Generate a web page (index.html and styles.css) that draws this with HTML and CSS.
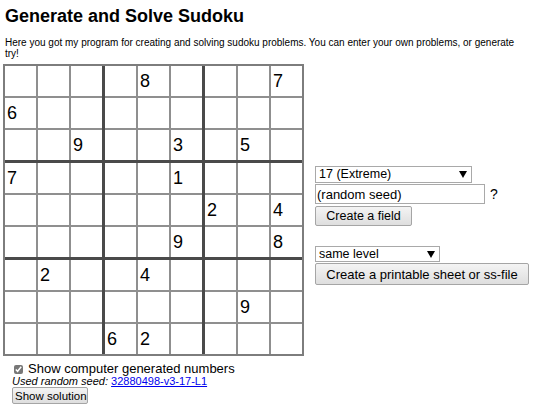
FILE: index.html
```html
<!DOCTYPE html>
<html>
<head>
<meta charset="utf-8">
<title>Generate and Solve Sudoku</title>
<link rel="stylesheet" href="styles.css">
</head>
<body>
<h1 class="title">Generate and Solve Sudoku</h1>
<p class="intro"><span class="line">Here you got my program for creating and solving sudoku problems. You can enter your own problems, or generate</span><br>try!</p>
<div class="main">
  <div class="board">
    <div class="box"><div class="cell"></div><div class="cell"></div><div class="cell"></div><div class="cell">6</div><div class="cell"></div><div class="cell"></div><div class="cell"></div><div class="cell"></div><div class="cell">9</div></div>
    <div class="box"><div class="cell"></div><div class="cell">8</div><div class="cell"></div><div class="cell"></div><div class="cell"></div><div class="cell"></div><div class="cell"></div><div class="cell"></div><div class="cell">3</div></div>
    <div class="box"><div class="cell"></div><div class="cell"></div><div class="cell">7</div><div class="cell"></div><div class="cell"></div><div class="cell"></div><div class="cell"></div><div class="cell">5</div><div class="cell"></div></div>
    <div class="box"><div class="cell">7</div><div class="cell"></div><div class="cell"></div><div class="cell"></div><div class="cell"></div><div class="cell"></div><div class="cell"></div><div class="cell"></div><div class="cell"></div></div>
    <div class="box"><div class="cell"></div><div class="cell"></div><div class="cell">1</div><div class="cell"></div><div class="cell"></div><div class="cell"></div><div class="cell"></div><div class="cell"></div><div class="cell">9</div></div>
    <div class="box"><div class="cell"></div><div class="cell"></div><div class="cell"></div><div class="cell">2</div><div class="cell"></div><div class="cell">4</div><div class="cell"></div><div class="cell"></div><div class="cell">8</div></div>
    <div class="box"><div class="cell"></div><div class="cell">2</div><div class="cell"></div><div class="cell"></div><div class="cell"></div><div class="cell"></div><div class="cell"></div><div class="cell"></div><div class="cell"></div></div>
    <div class="box"><div class="cell"></div><div class="cell">4</div><div class="cell"></div><div class="cell"></div><div class="cell"></div><div class="cell"></div><div class="cell">6</div><div class="cell">2</div><div class="cell"></div></div>
    <div class="box"><div class="cell"></div><div class="cell"></div><div class="cell"></div><div class="cell"></div><div class="cell">9</div><div class="cell"></div><div class="cell"></div><div class="cell"></div><div class="cell"></div></div>
  </div>
  <div class="panel">
    <div class="select-wrap level">
      <select class="select"><option>17 (Extreme)</option></select>
      <svg class="arrow" width="8" height="7" viewBox="0 0 8 7"><polygon points="0,0 8,0 4,7" fill="#000"/></svg>
    </div>
    <div class="seed-row">
      <input class="seed-input" type="text" value="(random seed)">
      <span class="help">?</span>
    </div>
    <button class="btn btn-field">Create a field</button>
    <div class="select-wrap same">
      <select class="select"><option>same level</option></select>
      <svg class="arrow" width="8" height="7" viewBox="0 0 8 7"><polygon points="0,0 8,0 4,7" fill="#000"/></svg>
    </div>
    <button class="btn btn-wide">Create a printable sheet or ss-file</button>
  </div>
</div>
<div class="footer">
  <label class="check"><input class="checkbox" type="checkbox" checked> Show computer generated numbers</label>
  <div class="seed"><em>Used random seed:</em> <a class="seed-link" href="#">32880498-v3-17-L1</a></div>
  <button class="btn btn-small">Show solution</button>
</div>
</body>
</html>
```
FILE: styles.css
```css
html, body {
  margin: 0;
  padding: 0;
  background: #fff;
}
body {
  font-family: "Liberation Sans", Arial, sans-serif;
  color: #000;
  padding: 0 0 0 3px;
}
.title {
  font-size: 18px;
  font-weight: bold;
  margin: 0;
  padding: 6px 0 0 2px;
  line-height: 21px;
}
.intro {
  font-size: 10px;
  line-height: 11px;
  margin: 10px 0 0 2px;
}
.line {
  white-space: nowrap;
}
.main {
  display: flex;
  align-items: flex-start;
  margin-top: 5px;
}
.board {
  display: grid;
  grid-template-columns: repeat(3, auto);
  gap: 3px;
  background: #4a4a4a;
  border: 2px solid #7d7d7d;
  width: max-content;
}
.box {
  display: grid;
  grid-template-columns: repeat(3, 31px);
  grid-auto-rows: 30px;
  gap: 2px;
  background: #8f8f8f;
}
.cell {
  background: #fff;
  font-size: 18px;
  line-height: 30px;
  padding-left: 2px;
}
.panel {
  display: flex;
  flex-direction: column;
  align-items: flex-start;
  margin: 102px 0 0 11px;
  font-size: 12.5px;
}
.select-wrap {
  position: relative;
  display: block;
}
.select {
  appearance: none;
  -webkit-appearance: none;
  font-family: "Liberation Sans", Arial, sans-serif;
  font-size: 12.5px;
  color: #000;
  background: #fff;
  border: 1px solid #a9a9a9;
  border-radius: 0;
  padding: 0 0 0 3px;
  margin: 0;
  height: 17px;
  line-height: 15px;
  display: block;
}
.level .select {
  width: 157px;
}
.same .select {
  width: 125px;
  height: 16px;
}
.arrow {
  position: absolute;
  top: 5px;
  right: 5px;
  pointer-events: none;
}
.same .arrow {
  top: 5px;
}
.seed-row {
  display: flex;
  align-items: center;
  margin-top: 1px;
}
.seed-input {
  font-family: "Liberation Sans", Arial, sans-serif;
  font-size: 13px;
  width: 170px;
  height: 20px;
  box-sizing: border-box;
  border: 1px solid #a9a9a9;
  padding: 0 1px;
  margin: 0;
}
.help {
  font-size: 14px;
  margin-left: 5px;
}
.btn {
  font-family: "Liberation Sans", Arial, sans-serif;
  font-size: 12.5px;
  color: #000;
  background: linear-gradient(#f4f4f4, #dedede);
  border: 1px solid #a5a5a5;
  border-radius: 2px;
  padding: 0 8px;
  height: 20px;
  margin: 2px 0 0 0;
  box-sizing: border-box;
  white-space: nowrap;
}
.btn-field {
  width: 97px;
  margin-bottom: 20px;
}
.btn-wide {
  width: 214px;
  height: 22px;
  font-size: 13px;
  margin-top: 1px;
}
.footer {
  display: flex;
  flex-direction: column;
  align-items: flex-start;
  padding-left: 9px;
  margin-top: 6px;
}
.check {
  display: flex;
  align-items: center;
  font-size: 13px;
  line-height: 14px;
  padding-left: 2px;
}
.checkbox {
  width: 9px;
  height: 9px;
  margin: 0 5px 0 0;
  accent-color: #777;
}
.seed {
  font-size: 11px;
  line-height: 11px;
  margin-top: 0;
}
.seed-link {
  color: #0000ee;
}
.btn-small {
  width: 76px;
  height: 17px;
  font-size: 11.5px;
  padding: 0 2px;
  margin-top: 0;
}
```
